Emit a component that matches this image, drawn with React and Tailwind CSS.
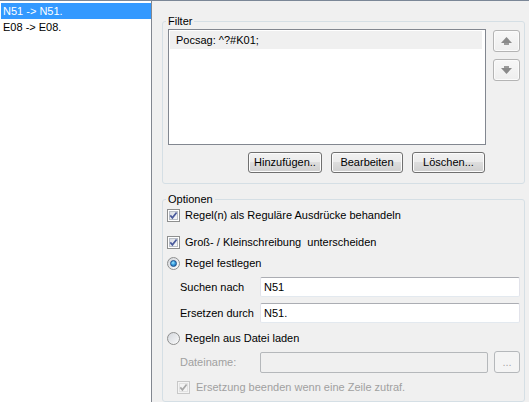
import { useState } from "react";

const rules = [
  { from: "N51", to: "N51." },
  { from: "E08", to: "E08." },
];

function CheckBox({ checked, disabled }) {
  return (
    <span
      className={`relative flex h-[13px] w-[13px] shrink-0 items-center justify-center border ${
        disabled ? "border-[#c8c8c8] bg-[#f4f4f4]" : "border-[#8e8f8f] bg-white"
      }`}
    >
      <span
        className={`h-[9px] w-[9px] border ${
          disabled
            ? "border-[#e2e2e2] bg-[#f4f4f4]"
            : "border-[#b9bec6] bg-[linear-gradient(135deg,#d8dce3,#f8f9fa)]"
        }`}
      />
      {checked && (
        <svg
          className="absolute inset-0"
          width="11"
          height="11"
          viewBox="0 0 11 11"
        >
          <path
            d="M2.3 5.4 L4.4 7.8 L8.6 2.4"
            fill="none"
            stroke={disabled ? "#a8a8a8" : "#4a5a9c"}
            strokeWidth="1.7"
          />
        </svg>
      )}
    </span>
  );
}

function Radio({ checked }) {
  return (
    <span className="flex h-[13px] w-[13px] shrink-0 items-center justify-center rounded-full border border-[#8e8f8f] bg-[linear-gradient(135deg,#d2d5da,#ffffff)]">
      {checked ? (
        <span className="h-[7px] w-[7px] rounded-full border border-[#1c4f8c] bg-[radial-gradient(circle_at_40%_35%,#9fe6ff_0%,#3aa0e0_45%,#145aa0_100%)]" />
      ) : (
        <span className="h-[9px] w-[9px] rounded-full bg-[linear-gradient(135deg,#d8dbe0,#f4f5f6)]" />
      )}
    </span>
  );
}

function Button({ children, width }) {
  return (
    <button
      type="button"
      className={`${width} h-[21px] rounded-[3px] border border-[#707070] bg-[linear-gradient(#f2f2f2_0%,#ebebeb_50%,#dddddd_50%,#cfcfcf_100%)] text-center leading-[19px] shadow-[inset_0_0_0_1px_#fcfcfc]`}
    >
      {children}
    </button>
  );
}

function ArrowButton({ down }) {
  return (
    <button
      type="button"
      className="flex h-[22px] w-[27px] items-center justify-center rounded-[3px] border border-[#b4b4b4] bg-[linear-gradient(#f7f7f7,#eeeeee)] shadow-[inset_0_0_0_1px_#fbfbfb]"
    >
      <svg width="11" height="8" viewBox="0 0 11 8">
        {down ? (
          <>
            <rect x="3" y="0" width="5" height="2" fill="#9a9a9a" />
            <polygon points="0,2 11,2 5.5,8" fill="#8a8a8a" />
          </>
        ) : (
          <>
            <polygon points="5.5,0 11,6 0,6" fill="#8a8a8a" />
            <rect x="3" y="6" width="5" height="2" fill="#9a9a9a" />
          </>
        )}
      </svg>
    </button>
  );
}

function TextBox({ value, width, disabled }) {
  return (
    <div
      className={`${width} flex h-[20px] items-center rounded-[2px] border border-t-[#abadb3] border-x-[#e2e3ea] border-b-[#e3e9ef] pl-[3px] ${
        disabled ? "bg-[#f0f0f0] border-[#b5b8bb]" : "bg-white"
      }`}
    >
      {value}
    </div>
  );
}

export default function App() {
  const [selected, setSelected] = useState(0);

  return (
    <div className="flex h-[402px] w-[529px] overflow-hidden border-t border-[#7b8797] bg-[#f0f0f0] font-['Liberation_Sans',Arial,sans-serif] text-[11px] text-black">
      {/* rule list */}
      <div className="w-[152px] shrink-0 border-r border-[#828790] bg-white pt-[2px] pl-px">
        {rules.map((rule, i) => (
          <div
            key={rule.from}
            onClick={() => setSelected(i)}
            className={`h-4 pl-[2px] leading-4 ${
              selected === i ? "bg-[#3399ff] text-white" : ""
            }`}
          >
            {rule.from} -&gt; {rule.to}
          </div>
        ))}
      </div>

      <div className="flex-1 pr-[4px] pl-[10px]">
        {/* Filter */}
        <fieldset className="mt-[13px] rounded-[3px] border border-[#d5dfe5] pb-[10px]">
          <legend className="ml-[3px] px-[2px] leading-[14px]">Filter</legend>
          <div className="pt-px pl-[5px]">
            <div className="flex">
              <div className="h-[116px] w-[318px] border border-[#828790] bg-white p-px pr-[3px]">
                <div className="h-[18px] bg-[#f0f0f0] pl-[6px] leading-[18px]">
                  Pocsag: ^?#K01;
                </div>
              </div>
              <div className="ml-[7px] flex flex-col gap-[7px] pt-px">
                <ArrowButton />
                <ArrowButton down />
              </div>
            </div>
            <div className="mt-[7px] flex w-[318px] justify-end gap-[9px] pr-px">
              <Button width="w-[74px]">Hinzufügen..</Button>
              <Button width="w-[72px]">Bearbeiten</Button>
              <Button width="w-[73px]">Löschen...</Button>
            </div>
          </div>
        </fieldset>

        {/* Optionen */}
        <fieldset className="mt-[8px] h-[210px] rounded-[3px] border border-[#d5dfe5]">
          <legend className="ml-[3px] px-[2px] leading-[14px]">Optionen</legend>
          <div className="pl-[4px]">
            <label className="mt-px flex h-[17px] items-center gap-[5px]">
              <CheckBox checked />
              Regel(n) als Reguläre Ausdrücke behandeln
            </label>
            <label className="mt-[10px] flex h-[17px] items-center gap-[5px]">
              <CheckBox checked />
              Groß- / Kleinschreibung&nbsp; unterscheiden
            </label>
            <label className="mt-[4px] flex h-[17px] items-center gap-[5px]">
              <Radio checked />
              Regel festlegen
            </label>

            <div className="mt-[5px] flex items-center pl-[13px]">
              <span className="w-[80px]">Suchen nach</span>
              <TextBox value="N51" width="w-[260px]" />
            </div>
            <div className="mt-[6px] flex items-center pl-[13px]">
              <span className="w-[80px]">Ersetzen durch</span>
              <TextBox value="N51." width="w-[260px]" />
            </div>

            <label className="mt-[7px] flex h-[17px] items-center gap-[5px]">
              <Radio />
              Regeln aus Datei laden
            </label>

            <div className="mt-[4px] flex h-[22px] items-center pl-[13px] text-[#a0a0a0]">
              <span className="w-[80px]">Dateiname:</span>
              <div className="h-[21px] w-[228px] rounded-[2px] border border-[#b5b8bb] bg-[#f0f0f0]" />
              <div className="ml-[6px] flex h-[22px] w-[26px] items-center justify-center rounded-[3px] border border-[#b5b8bb] bg-[#f4f4f4] text-[#a8a8a8]">
                ...
              </div>
            </div>

            <label className="mt-[6px] flex h-[17px] items-center gap-[6px] pl-[10px] text-[#a0a0a0]">
              <CheckBox checked disabled />
              Ersetzung beenden wenn eine Zeile zutraf.
            </label>
          </div>
        </fieldset>
      </div>
    </div>
  );
}
